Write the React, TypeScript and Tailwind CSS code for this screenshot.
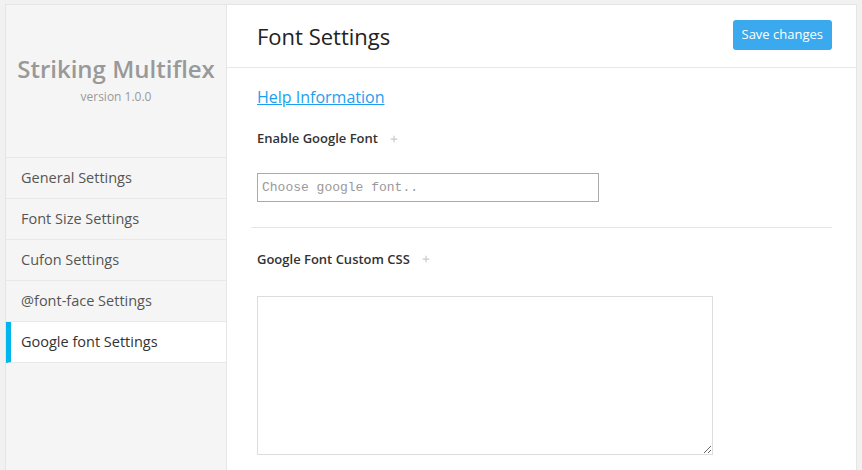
import { Plus } from 'lucide-react'

const MENU = ['General Settings', 'Font Size Settings', 'Cufon Settings', '@font-face Settings', 'Google font Settings']
const ACTIVE = 'Google font Settings'

function FieldLabel({ children }: { children: string }) {
  return (
    <div className="flex items-center gap-[11px] text-[13px] font-semibold text-[#333]">
      <span>{children}</span>
      <Plus size={10} strokeWidth={3} className="text-[#ccc]" />
    </div>
  )
}

export default function App() {
  return (
    <div className="h-[470px] w-[862px] overflow-hidden bg-[#f1f1f1] pl-[5px] pt-[4px] font-['Open_Sans',sans-serif]">
      <div className="flex h-[500px] w-[852px] border border-[#e5e5e5]">
        {/* Sidebar */}
        <aside className="w-[221px] shrink-0 border-r border-[#e6e6e6] bg-[#f5f5f5]">
          <div className="flex h-[152px] flex-col items-center justify-center pb-[4px]">
            <div className="text-[24px] font-semibold leading-8 text-[#999]">Striking Multiflex</div>
            <div className="mt-[3px] text-[12px] text-[#999]">version 1.0.0</div>
          </div>
          <nav className="border-t border-[#e8e8e8]">
            {MENU.map(item => {
              const active = item === ACTIVE
              return (
                <div key={item}
                  className={active
                    ? 'flex h-[41px] items-center border-b border-l-[5px] border-[#e8e8e8] border-l-[#00b4ec] bg-white pl-[10px] text-[14.5px] text-[#333]'
                    : 'flex h-[41px] items-center border-b border-[#e8e8e8] pl-[15px] text-[14.5px] text-[#555]'}>
                  {item}
                </div>
              )
            })}
          </nav>
        </aside>

        {/* Main */}
        <main className="flex-1 bg-white">
          <header className="flex h-[63px] items-center justify-between border-b border-[#e8e8e8] pl-[30px] pr-[24px]">
            <h1 className="text-[22px] text-[#222]">Font Settings</h1>
            <button className="mb-[2px] h-[30px] rounded-[3px] bg-[#3aa9ee] px-[9px] text-[13px] text-white">Save changes</button>
          </header>

          <div className="px-[24px] pt-[17px]">
            <a href="#" className="ml-[6px] text-[16px] text-[#1e9ef0] underline">Help Information</a>

            <section className="px-[6px] pb-[25px] pt-[20px]">
              <FieldLabel>Enable Google Font</FieldLabel>
              <input placeholder="Choose google font.."
                className="mt-[24px] h-[29px] w-[342px] border border-[#aaa] px-[4px] font-['Liberation_Mono',monospace] text-[13px] placeholder:text-[#999]" />
            </section>

            <section className="border-t border-[#e6e6e6] px-[6px] pt-[22px]">
              <FieldLabel>Google Font Custom CSS</FieldLabel>
              <textarea className="mt-[27px] block h-[159px] w-[456px] border border-[#ddd]" />
            </section>
          </div>
        </main>
      </div>
    </div>
  )
}
